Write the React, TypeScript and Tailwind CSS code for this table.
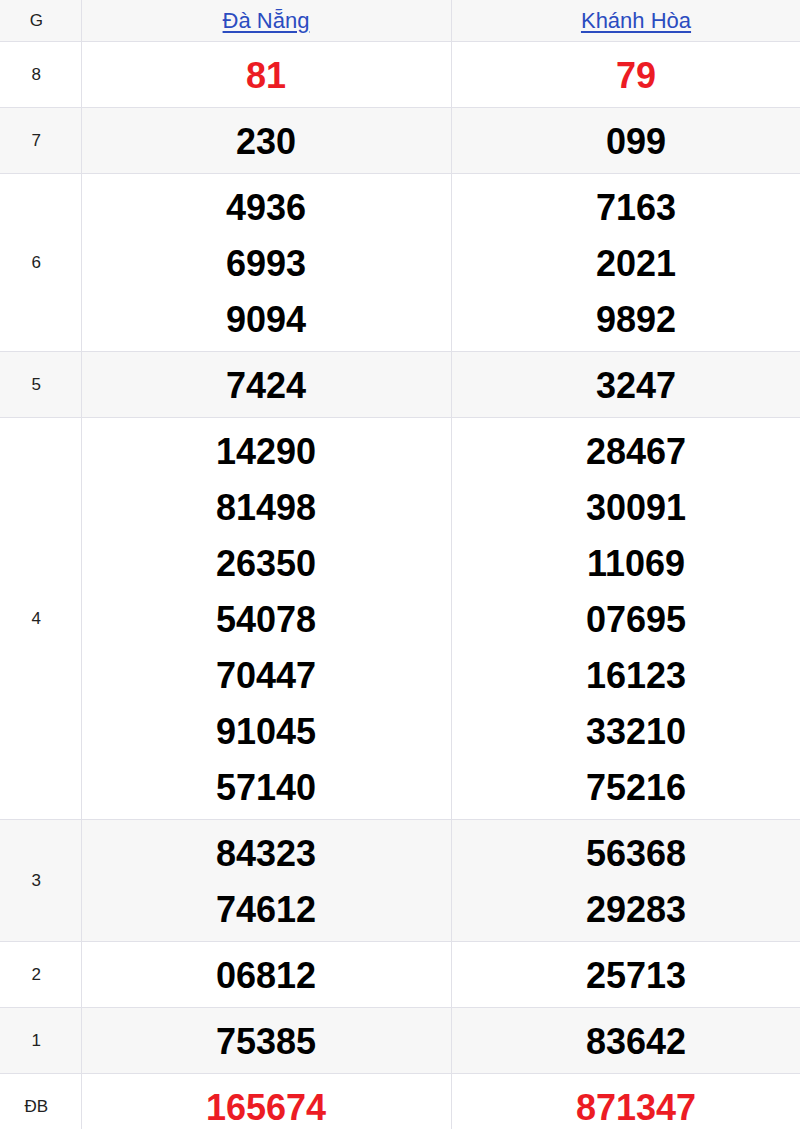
const rows: { g: string; a: string[]; b: string[]; red?: boolean }[] = [
  { g: '8', a: ['81'], b: ['79'], red: true },
  { g: '7', a: ['230'], b: ['099'] },
  { g: '6', a: ['4936', '6993', '9094'], b: ['7163', '2021', '9892'] },
  { g: '5', a: ['7424'], b: ['3247'] },
  {
    g: '4',
    a: ['14290', '81498', '26350', '54078', '70447', '91045', '57140'],
    b: ['28467', '30091', '11069', '07695', '16123', '33210', '75216'],
  },
  { g: '3', a: ['84323', '74612'], b: ['56368', '29283'] },
  { g: '2', a: ['06812'], b: ['25713'] },
  { g: '1', a: ['75385'], b: ['83642'] },
  { g: 'ĐB', a: ['165674'], b: ['871347'], red: true },
]

export default function App() {
  return (
    <div className="w-[800px] h-[1129px] overflow-hidden bg-white [font-family:'Liberation_Sans',Arial,sans-serif]">
      <table className="w-[821px] table-fixed border-collapse">
        <colgroup>
          <col className="w-[81px]" />
          <col className="w-[370px]" />
          <col className="w-[370px]" />
        </colgroup>
        <thead>
          <tr className="h-[41px] bg-[#f7f7f7]">
            <th className="border border-t-0 border-l-0 border-[#e1e1e8] text-[17px] font-normal text-[#222] pr-[8px]">G</th>
            <th className="border border-t-0 border-[#e1e1e8] font-normal">
              <a href="#" className="text-[22px] text-[#2b4cc0] underline underline-offset-[3px]">Đà Nẵng</a>
            </th>
            <th className="border border-t-0 border-[#e1e1e8] font-normal">
              <a href="#" className="text-[22px] text-[#2b4cc0] underline underline-offset-[3px]">Khánh Hòa</a>
            </th>
          </tr>
        </thead>
        <tbody>
          {rows.map((r, i) => (
            <tr key={r.g} className={i % 2 === 1 ? 'bg-[#f7f7f7]' : 'bg-white'}>
              <td className="border border-l-0 border-[#e1e1e8] text-center text-[17px] text-[#222] pr-[8px] pt-[2px]">{r.g}</td>
              {[r.a, r.b].map((nums, j) => (
                <td key={j} className="border border-[#e1e1e8] text-center pt-[6px] pb-[3px]">
                  {nums.map((n) => (
                    <div
                      key={n}
                      className={`text-[36px] font-bold leading-[56px] ${r.red ? 'text-[#ec1c24]' : 'text-black'}`}
                    >
                      {n}
                    </div>
                  ))}
                </td>
              ))}
            </tr>
          ))}
        </tbody>
      </table>
    </div>
  )
}
